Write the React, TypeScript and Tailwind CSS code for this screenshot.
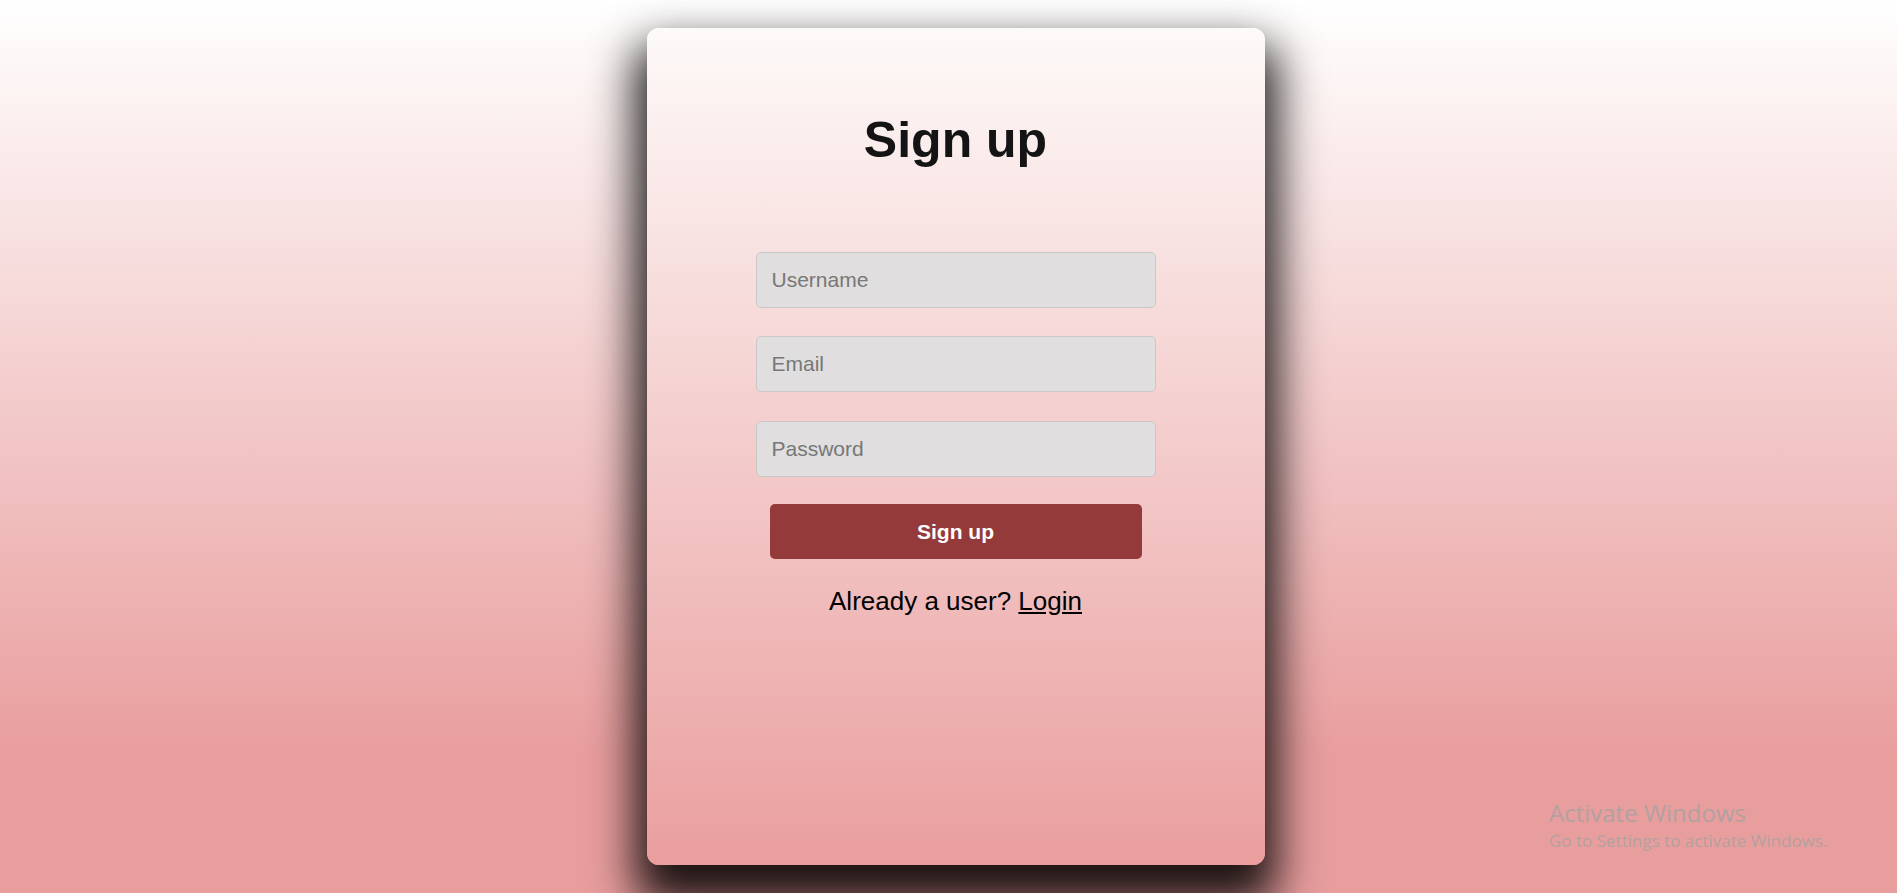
import { useState } from 'react'

export default function App() {
  const [username, setUsername] = useState('')
  const [email, setEmail] = useState('')
  const [password, setPassword] = useState('')

  const inputClass =
    'w-[400px] h-[56px] rounded-[5px] border border-[#cbc8c8] bg-[#e0dede] px-[15px] text-[21px] text-[#222] placeholder:text-[#777] outline-none'

  return (
    <div
      className="relative h-[893px] w-full overflow-hidden bg-[linear-gradient(to_bottom,#ffffff_0%,#e99e9e_84%,#e99e9e_100%)]"
      style={{ fontFamily: '"Liberation Sans", Arial, sans-serif' }}
    >
      <div className="flex justify-center pt-[28px] pl-[14px]">
        <div className="flex h-[837px] w-[618px] flex-col items-center rounded-[12px] bg-[linear-gradient(to_bottom,#fdfaf9_0%,#ea9e9e_100%)] pt-[87px] shadow-[0_28px_45px_12px_rgba(0,0,0,0.88)]">
          <h1 className="text-[50px] leading-[50px] font-bold text-[#141414]">Sign up</h1>

          <form className="mt-[87px] flex flex-col items-center" onSubmit={e => e.preventDefault()}>
            <input
              className={inputClass}
              placeholder="Username"
              value={username}
              onChange={e => setUsername(e.target.value)}
            />
            <input
              className={`${inputClass} mt-[28px]`}
              placeholder="Email"
              value={email}
              onChange={e => setEmail(e.target.value)}
            />
            <input
              className={`${inputClass} mt-[29px]`}
              type="password"
              placeholder="Password"
              value={password}
              onChange={e => setPassword(e.target.value)}
            />
            <button
              type="submit"
              className="mt-[27px] h-[55px] w-[372px] rounded-[5px] bg-[#943a3a] text-[21px] font-bold text-white"
            >
              Sign up
            </button>
          </form>

          <p className="mt-[27px] text-[26px] leading-[30px] text-black">
            Already a user?{' '}
            <a href="#" className="text-black underline">
              Login
            </a>
          </p>
        </div>
      </div>

      <div
        className="absolute left-[1549px] top-[797px] text-[#b3a0a0]"
        style={{ fontFamily: '"Open Sans", "Noto Sans", sans-serif' }}
      >
        <div className="text-[24px] leading-[32px]">Activate Windows</div>
        <div className="text-[17px] leading-[24px]">Go to Settings to activate Windows.</div>
      </div>
    </div>
  )
}
